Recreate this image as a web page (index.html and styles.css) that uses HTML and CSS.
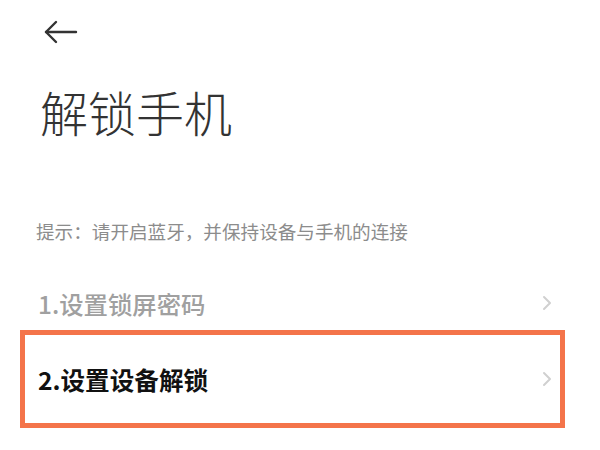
FILE: index.html
```html
<!DOCTYPE html>
<html lang="zh-CN">
<head>
<meta charset="utf-8">
<link rel="stylesheet" href="styles.css">
</head>
<body>
<div class="page">
  <div class="topbar">
    <svg class="back" width="34" height="24" viewBox="0 0 34 24" fill="none" stroke="#333" stroke-width="2.4" stroke-linecap="round" stroke-linejoin="round">
      <path d="M2 12 H32"/>
      <path d="M12 2 L2 12 L12 22"/>
    </svg>
  </div>
  <h1 class="title">解锁手机</h1>
  <p class="hint">提示：请开启蓝牙，并保持设备与手机的连接</p>
  <div class="list">
    <div class="row row-done">
      <span class="label">1.设置锁屏密码</span>
      <svg class="chev" width="10" height="16" viewBox="0 0 10 16" fill="none" stroke="#d0d0d0" stroke-width="2" stroke-linecap="round" stroke-linejoin="round"><path d="M2 2 L8 8 L2 14"/></svg>
    </div>
    <div class="row row-active">
      <span class="label">2.设置设备解锁</span>
      <svg class="chev" width="10" height="16" viewBox="0 0 10 16" fill="none" stroke="#d0d0d0" stroke-width="2" stroke-linecap="round" stroke-linejoin="round"><path d="M2 2 L8 8 L2 14"/></svg>
    </div>
  </div>
</div>
</body>
</html>
```
FILE: styles.css
```css
html, body {
  margin: 0;
  padding: 0;
  background: #ffffff;
}
body {
  font-family: "Noto Sans CJK SC", "Noto Sans", sans-serif;
  width: 600px;
  height: 450px;
  overflow: hidden;
}
.page {
  display: flex;
  flex-direction: column;
}
.topbar {
  height: 64px;
  display: flex;
  align-items: center;
  padding-left: 44px;
}
.back {
  display: block;
}
.title {
  margin: 23px 0 0 0;
  padding-left: 40px;
  font-size: 48px;
  line-height: 48px;
  font-weight: 300;
  color: #333333;
}
.hint {
  margin: 86px 0 0 0;
  padding-left: 36px;
  font-size: 18.6px;
  line-height: 19px;
  color: #8c8c8c;
}
.list {
  margin: 36px 0 0 20px;
  width: 545px;
  display: flex;
  flex-direction: column;
}
.row {
  display: flex;
  align-items: center;
  justify-content: space-between;
  box-sizing: border-box;
  padding: 0 8px 0 13px;
  border: 5px solid transparent;
}
.row-done {
  height: 54px;
  border-top-width: 0;
  border-bottom-width: 0;
}
.row-done .label {
  color: #a0a0a0;
  font-size: 24.4px;
  font-weight: 500;
}
.row-active {
  height: 98px;
  border-color: #f4744a;
}
.row-active .label {
  color: #111111;
  font-size: 24.6px;
  font-weight: 700;
}
.label {
  line-height: 25px;
}
.chev {
  display: block;
}
```
